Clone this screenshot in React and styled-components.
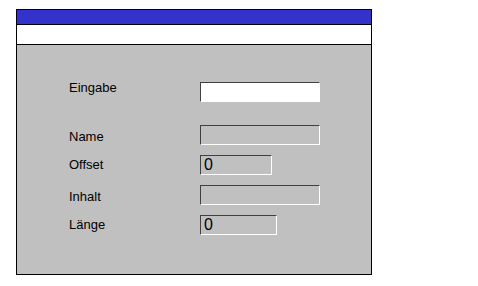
import styled, { createGlobalStyle } from "styled-components";

const GlobalStyle = createGlobalStyle`
  body {
    margin: 0;
    background: #ffffff;
    font-family: "Liberation Sans", Arial, sans-serif;
  }
`;

const fields = [
  { label: "Name", value: "", width: 120, shift: 2 },
  { label: "Offset", value: "0", width: 72, shift: 0 },
  { label: "Inhalt", value: "", width: 120, shift: 2 },
  { label: "Länge", value: "0", width: 77, shift: 0 },
];

function App() {
  return (
    <>
      <GlobalStyle />
      <Window>
        <TitleBar />
        <MenuBar />
        <Panel>
          <Row>
            <Label $shift={-4}>Eingabe</Label>
            <Field $width={120} $white defaultValue="" />
          </Row>
          <Fields>
            {fields.map((field) => (
              <Row key={field.label}>
                <Label $shift={field.shift}>{field.label}</Label>
                <Field $width={field.width} defaultValue={field.value} readOnly />
              </Row>
            ))}
          </Fields>
        </Panel>
      </Window>
    </>
  );
}

export default App;

const Window = styled.div`
  margin: 9px 0 0 16px;
  width: 354px;
  height: 264px;
  border: 1px solid #000000;
  display: flex;
  flex-direction: column;
  background: #c0c0c0;
`;

const TitleBar = styled.div`
  height: 14px;
  background: #3333cc;
  border-bottom: 1px solid #000000;
`;

const MenuBar = styled.div`
  height: 19px;
  background: #ffffff;
  border-bottom: 1px solid #000000;
`;

const Panel = styled.div`
  flex: 1;
  padding: 37px 0 0 52px;
  display: flex;
  flex-direction: column;
  gap: 23px;
`;

const Fields = styled.div`
  display: flex;
  flex-direction: column;
  gap: 10px;
`;

const Row = styled.div`
  display: flex;
  align-items: flex-start;
  height: 20px;
`;

const Label = styled.span`
  width: 131px;
  font-size: 13px;
  line-height: 20px;
  color: #000000;
  position: relative;
  top: ${(props) => props.$shift}px;
`;

const Field = styled.input`
  box-sizing: border-box;
  width: ${(props) => props.$width}px;
  height: 20px;
  margin: 0;
  padding: 0 0 0 3px;
  border-style: solid;
  border-width: 1px;
  border-color: #404040 #ffffff #ffffff #404040;
  background: ${(props) => (props.$white ? "#ffffff" : "#c0c0c0")};
  font-family: "Liberation Sans", Arial, sans-serif;
  font-size: 16px;
  font-weight: 300;
  color: #000000;
  outline: none;
`;
